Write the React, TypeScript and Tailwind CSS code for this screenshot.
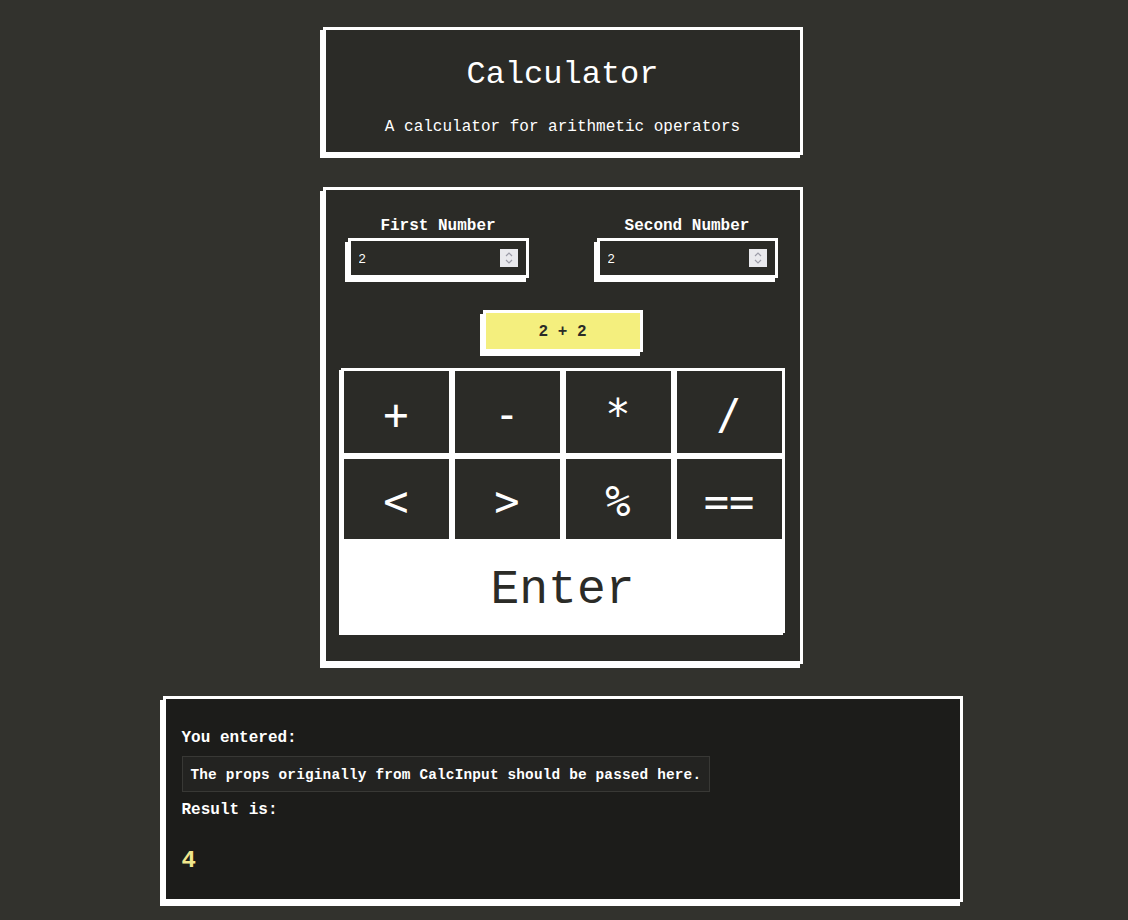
import { useState } from "react";

const ops = ["+", "-", "*", "/", "<", ">", "%", "=="];

const mono = "font-['Liberation_Mono','DejaVu_Sans_Mono',monospace]";

function NumberField({ label, value, onChange }: { label: string; value: string; onChange: (v: string) => void }) {
  return (
    <div className="flex flex-col items-center">
      <label className="text-[16px] leading-6 font-bold text-white">{label}</label>
      <div className="relative w-[181px] h-[40px] border-[3px] border-white bg-[#2b2b27] shadow-[-3px_4px_0_#ffffff]">
        <input
          type="text"
          value={value}
          onChange={(e) => onChange(e.target.value)}
          className="w-full h-full bg-transparent pl-[8px] text-[13px] text-white font-['Liberation_Sans',Arial,sans-serif] outline-none"
        />
        <span className="absolute right-[8px] top-[8px] w-[18px] h-[18px] bg-[#e9e9ed] flex flex-col items-center justify-center">
          <svg width="10" height="14" viewBox="0 0 10 14" fill="none" stroke="#9c9ca8" strokeWidth="1.2">
            <path d="M2 5 L5 2 L8 5" />
            <path d="M2 9 L5 12 L8 9" />
          </svg>
        </span>
      </div>
    </div>
  );
}

export default function App() {
  const [first, setFirst] = useState("2");
  const [second, setSecond] = useState("2");
  const [op, setOp] = useState("+");

  return (
    <div className={`min-h-screen bg-[#32322d] ${mono} text-white flex flex-col items-center pt-[27px] pb-[16px]`}>
      <header className="w-[480px] mr-[3px] border-[3px] border-white bg-[#2b2b27] shadow-[-3px_3px_0_#ffffff] text-center pt-[25px] pb-[13px]">
        <h1 className="text-[32px] leading-[40px]">Calculator</h1>
        <p className="text-[16px] leading-6 mt-[20px]">A calculator for arithmetic operators</p>
      </header>

      <section className="w-[480px] mr-[3px] mt-[32px] border-[3px] border-white bg-[#2b2b27] shadow-[-3px_4px_0_#ffffff] pt-[24px] pb-[28px]">
        <div className="flex justify-between px-[22px]">
          <NumberField label="First Number" value={first} onChange={setFirst} />
          <NumberField label="Second Number" value={second} onChange={setSecond} />
        </div>

        <div className="flex justify-center mt-[32px]">
          <div className="w-[160px] h-[42px] border-[3px] border-white bg-[#f4ef7e] shadow-[-3px_4px_0_#ffffff] flex items-center justify-center pt-[2px] text-[16px] font-bold text-[#2b2b27]">
            {first} {op} {second}
          </div>
        </div>

        <div className="mx-[15px] mt-[16px] bg-white p-[3px] pb-0 shadow-[-2px_2px_0_#ffffff]">
          <div className="grid grid-cols-4 gap-[6px]">
            {ops.map((o, i) => (
              <button
                key={o}
                type="button"
                onClick={() => setOp(o)}
                className={`bg-[#2b2b27] text-white text-[42px] leading-none font-['DejaVu_Sans_Mono',monospace] flex items-center justify-center pt-[6px] ${
                  i < 4 ? "h-[82px]" : "h-[80px]"
                }`}
              >
                {o}
              </button>
            ))}
          </div>
          <button type="button" className="w-full h-[94px] bg-white text-[#2b2b27] text-[48px] leading-none pt-[8px]">
            Enter
          </button>
        </div>
      </section>

      <section className="w-[800px] mr-[3px] mt-[32px] border-[3px] border-white bg-[#1c1c1a] shadow-[-3px_4px_0_#ffffff] px-[16px] pt-[27px] pb-[22px]">
        <p className="text-[16px] leading-6 font-bold">You entered:</p>
        <div className="mt-[6px] inline-block border border-[#383835] bg-[#232321] px-[8px] h-[36px] leading-[36px] text-[14.4px] tracking-[0.17px] font-bold">
          The props originally from CalcInput should be passed here.
        </div>
        <p className="mt-[6px] text-[16px] leading-6 font-bold">Result is:</p>
        <p className="mt-[23px] text-[24px] leading-8 font-bold text-[#f0e68c]">4</p>
      </section>
    </div>
  );
}
